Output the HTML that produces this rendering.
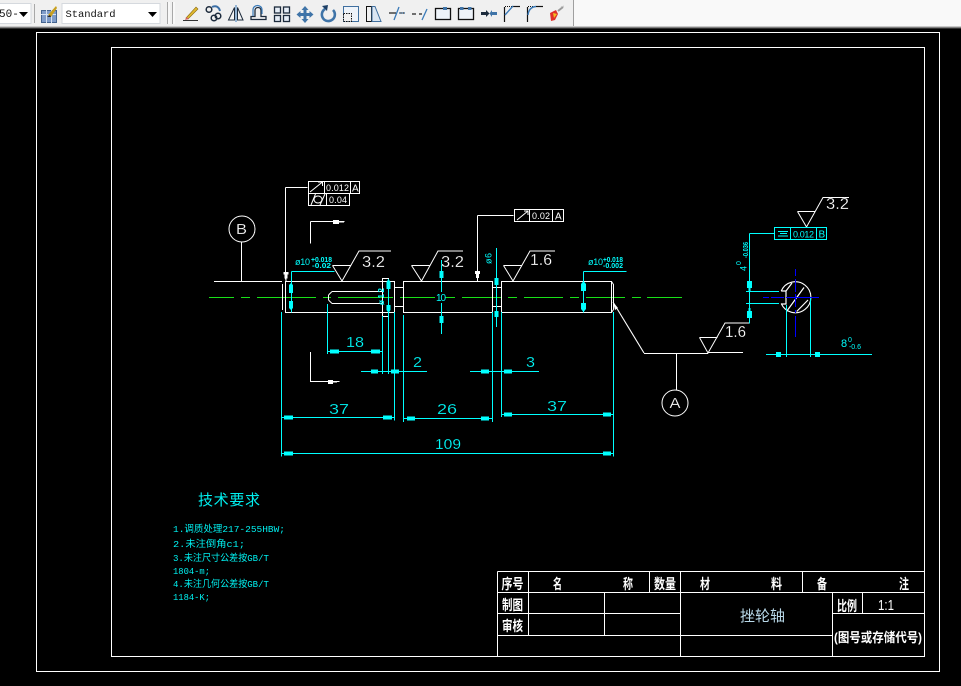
<!DOCTYPE html>
<html><head><meta charset="utf-8">
<style>
html,body{margin:0;padding:0;background:#000;width:961px;height:686px;overflow:hidden}
svg{position:absolute;left:0;top:0;display:block}
.t{font-family:"Liberation Sans","Noto Sans CJK SC",sans-serif}
.m{font-family:"Liberation Mono",monospace}
.c{font-family:"Liberation Sans","Noto Sans CJK SC",sans-serif}
.n{font-family:"Liberation Mono","Noto Sans CJK SC",monospace}
.b{font-family:"Liberation Sans","Noto Sans CJK SC",sans-serif;font-weight:700}
</style></head><body>
<svg width="961" height="686" viewBox="0 0 961 686" xmlns="http://www.w3.org/2000/svg">
<rect width="961" height="686" fill="#000"/>

<!-- toolbar -->
<rect x="0" y="0" width="961" height="27" fill="#f9f9f9"/>
<rect x="0" y="0" width="573" height="26" fill="#f0f0f0"/>
<rect x="573" y="0" width="1" height="26" fill="#a0a0a0"/>
<rect x="0" y="26" width="961" height="1" fill="#c8c8c8"/>
<rect x="0" y="27" width="961" height="1" fill="#808080"/>
<rect x="0" y="28" width="961" height="1" fill="#303030"/>
<rect x="-2" y="3.500" width="33" height="20" fill="#fff" stroke="#d5d9de"/>
<text x="-1" y="17" class="m" font-size="11" fill="#111">50-</text>
<path d="M19 12h9l-4.500 5z" fill="#000"/>
<rect x="34" y="4" width="1" height="19" fill="#a8a8a8"/>
<rect x="41.500" y="10.500" width="15" height="12" fill="#7f9cc9" stroke="#44648f"/>
<path d="M41 14.500h15M46.500 10v13M51.500 10v13" stroke="#d6e2f2"/>
<path d="M48 15l8-9 1 2-6 9z" fill="#c8a020"/><path d="M47 17l3-2 1 2z" fill="#222"/>
<rect x="62" y="3.500" width="98" height="20" fill="#fff" stroke="#d5d9de"/>
<text x="65.500" y="17" class="m" font-size="10.500" fill="#111" textLength="50">Standard</text>
<path d="M148 12h9l-4.500 5z" fill="#000"/>
<path d="M167.500 2v22M172.500 2v22" stroke="#a8a8a8"/><path d="M169 2v22M174 2v22" stroke="#fff"/>

<!-- icons -->
<path d="M183 20.500h15" stroke="#333"/><path d="M186 18l10-11 2 2-10 10z" fill="#e0b830" stroke="#8a6a10" stroke-width=".6"/><path d="M185 20l1.500-3 2.500 2z" fill="#d06060"/>
<g fill="none" stroke="#1d2b3c" stroke-width="1.500"><circle cx="209" cy="9.500" r="2.800"/><circle cx="214" cy="18" r="2.800"/><circle cx="218" cy="16" r="2.800"/></g><path d="M212 7c4-2 7 0 8 4" fill="none" stroke="#3a6ea5" stroke-width="2"/>
<path d="M234.500 7.500l-6 12.500h6zM237.500 7.500l5.500 12.500h-5.500z" fill="#f4f4f4" stroke="#1d2b3c"/><path d="M236 5v17" stroke="#3a7ab8"/>
<path d="M251 19.500h15v-3h-5v-6c0-4-6-4-6 0v6h-4z" fill="none" stroke="#1d2b3c" stroke-width="1.300"/><path d="M253 16v-6c0-6 9-6 9 0v4" fill="none" stroke="#3a7ab8" stroke-width="1.200"/>
<g fill="#e6eef7" stroke="#1d2b3c" stroke-width="1.300"><rect x="274.500" y="7" width="6" height="6"/><rect x="283.500" y="7" width="6" height="6"/><rect x="274.500" y="15.500" width="6" height="6"/><rect x="283.500" y="15.500" width="6" height="6"/></g>
<path d="M305 6l3.500 4h-2v3h3v-2l4 3.500-4 3.500v-2h-3v3h2l-3.500 4-3.500-4h2v-3h-3v2l-4-3.500 4-3.500v2h3v-3h-2z" fill="#3f74a8"/>
<path d="M325 9a6.500 6.500 0 1 0 8 1" fill="none" stroke="#3f74a8" stroke-width="2.600"/><path d="M322 6l6-1 -1 6z" fill="#1d3f66"/>
<rect x="343.500" y="6.500" width="15" height="15" fill="#eef3f9" stroke="#3f6f9f"/><rect x="343.500" y="13.500" width="8" height="8" fill="#f0f0f0" stroke="#111" stroke-dasharray="1.500 1"/>
<rect x="366.500" y="6.500" width="5" height="15" fill="none" stroke="#111"/><path d="M372 6.500h3l6 15h-9z" fill="#dbe6f2" stroke="#3f6f9f"/>
<path d="M389 13h7M399 13h6" stroke="#222" stroke-width="1.200"/><path d="M399 13h6" stroke="#3a7ab8" stroke-dasharray="1.500 1"/><path d="M394 20l5-13" stroke="#3a7ab8" stroke-width="1.300"/>
<path d="M412 14h4M419 14h3" stroke="#222" stroke-width="1.200"/><path d="M422 20l5-11" stroke="#3a7ab8" stroke-width="1.300"/>
<rect x="435.500" y="8.500" width="15" height="11" fill="#eef3f9" stroke="#111" stroke-width="1.300"/><rect x="443" y="7" width="4" height="3" fill="#3f74a8"/>
<rect x="458.500" y="8.500" width="15" height="11" fill="#eef3f9" stroke="#111" stroke-width="1.300"/><rect x="460" y="7" width="3.500" height="3" fill="#3f74a8"/><rect x="468" y="7" width="3.500" height="3" fill="#3f74a8"/>
<path d="M481 12h5v-2l3.500 3.500-3.500 3.500v-2h-5z" fill="#1d2b3c"/><path d="M497 12h-5v-2l-2.500 3.500 2.500 3.500v-2h5z" fill="#3f74a8"/>
<path d="M504.500 22v-15" stroke="#111" stroke-width="1.200"/><path d="M513 6.500h7" stroke="#111" stroke-width="1.200"/><path d="M505 6.500h8" stroke="#111" stroke-dasharray="1 1"/><path d="M505 15l8-9" stroke="#3a7ab8" stroke-width="1.400"/>
<path d="M527.500 22v-15" stroke="#111" stroke-width="1.200"/><path d="M536 6.500h7" stroke="#111" stroke-width="1.200"/><path d="M528 6.500h8" stroke="#111" stroke-dasharray="1 1"/><path d="M528 15q1-8 8-8.500" fill="none" stroke="#3a7ab8" stroke-width="1.400"/>
<path d="M550 13l6-3 2 4-3 6-4 1z" fill="#e0302a"/><path d="M553 13l4 1-3 4z" fill="#f0c020"/><path d="M558 11l5-4" stroke="#999" stroke-width="2"/><path d="M561 7l3-1" stroke="#bbb" stroke-dasharray="1 1"/>

<!-- frames -->
<g fill="none" stroke="#fff" shape-rendering="crispEdges">
<rect x="36.500" y="32.500" width="903" height="639"/>
<rect x="111.500" y="47.500" width="813" height="609"/>
</g>

<!-- centre line -->
<path d="M209 297.500h25M241 297.500h9M257 297.500h59M323 297.500h8M338 297.500h55M400 297.500h35M445 297.500h10M462 297.500h39M508 297.500h9M524 297.500h39M570 297.500h9M586 297.500h39M632 297.500h9M647 297.500h35" stroke="#19e019" shape-rendering="crispEdges"/>

<!-- shaft -->
<g fill="none" stroke="#fff" shape-rendering="crispEdges">
<path d="M214 281.500h68M285 281.500h104M282.500 284v26M285 312.500h110M285.500 281.500v31"/>
<path d="M382.500 278.500h6v38h-6zM388.500 281.500h6v31M394.500 287.500h9M394.500 306.500h9"/>
<rect x="403.500" y="281.500" width="89" height="31"/>
<path d="M492.500 287.500h9M492.500 306.500h9"/>
<path d="M501.500 281.500h110v31h-110z"/>
<path d="M241.500 242v39"/>
<path d="M285.500 187.500h22M285.500 187.500v92"/>
<path d="M477.500 215.500h36M477.500 215.500v66"/>
<path d="M310.500 221.500v22M310.500 221.500h34M310.500 352v29.500h29"/>
<path d="M644 353.500h64M708 352.500h35M676.500 353.500v37"/>
<rect x="308.500" y="181.500" width="51" height="12"/><path d="M324.500 181.500v12M350.500 181.500v12"/>
<rect x="308.500" y="193.500" width="41" height="12"/><path d="M326.500 193.500v12"/>
<rect x="514.500" y="209.500" width="49" height="12"/><path d="M529.500 209.500v12M552.500 209.500v12"/>
<path d="M332 291.500h50M332 303.500h50M328.500 295v5"/>
</g>
<g fill="none" stroke="#fff">
<path d="M328.500 295l3.500-3.500M328.500 300l3.500 3.500M611.500 281.500l2 3v25l-2 3"/>
<circle cx="242" cy="229" r="13"/>
<circle cx="675" cy="403" r="13"/>
<path d="M332.500 265.500h18M332.500 265.500l9.500 15.500 17-30h32"/>
<path d="M411.500 265.500h18M411.500 265.500l10 15.500 16.500-30h25"/>
<path d="M503.500 265.500h18M503.500 265.500l9.500 15.500 17-30h25"/>
<path d="M699.500 337.500h18M699.500 337.500l8.500 15.500 17-30h24"/>
<path d="M797.500 211.500h18M797.500 211.500l9 15.500 16.500-29.500h26"/>
<path d="M613 302l31 51" stroke-width="1.100"/>
<path d="M310 192l12.500-10M318 182h4.500v4"/>
<ellipse cx="318" cy="199.500" rx="4" ry="3.500"/><path d="M311 205l4.500-11M320 205l5-11"/>
<path d="M517 220l11-9M524 211h4v4"/>
<path d="M781.200 291A15.500 15.500 0 1 1 781.200 303.500" stroke-width="1.100"/>
<path d="M781.200 291h4.800v13h-4.800M786 291l6-8M786.500 311.500l17.500-24M796.700 311.500l11.300-11.500" stroke-width="1.200"/>
</g>
<g fill="#fff">
<path d="M283.500 272h5v2.500h-1v4h-1v3h-1v-3h-1v-4h-1z"/>
<path d="M475 271h5v3h-1v4h-1v3h-1v-3h-1v-4h-1z"/>
<path d="M613 302l5 6-3 2z"/>
<rect x="333" y="220" width="6" height="4"/><rect x="339" y="221" width="5" height="1.500"/>
<rect x="328" y="380" width="5" height="4"/><rect x="333" y="381" width="4" height="1.500"/>
</g>

<!-- cyan dimensions -->
<g fill="none" stroke="#00ffff" shape-rendering="crispEdges">
<path d="M291.500 271.500h43M291.500 271.500v41"/>
<path d="M583.500 271.500h43M583.500 271.500v41"/>
<path d="M388.500 279v37M281.500 312v144.500M327.500 304v50M382.500 316v58M388.500 316v58M394.500 312v108.500M403.500 315v107M492.500 312v110M501.500 312v105M613.500 312v144.500M496.500 248v79M441.500 260v32M441.500 303v31"/>
<path d="M327.500 351.500h55M361 371.500h66M470 371.500h69M282 417.500h112M403 418.500h89M501 414.500h112M282 453.500h331"/>
<path d="M749.500 233.500h25M749.500 233.500v90M746 291.500h33M746 303.500h33M786.500 305v52M810.500 297v60M766 354.500h106"/>
<rect x="774.500" y="227.500" width="52" height="12"/><path d="M790.500 227.500v12M816.500 227.500v12"/>
</g>
<path d="M778 231.500h10M780 233.500h7M778 236h10" stroke="#00ffff"/>
<g fill="#00ffff">
<path d="M291 283l2 2v8h-4v-8zM291 310l2-2v-7h-4v7z"/>
<path d="M583.500 281l2.500 3v7h-5v-7zM583.500 312l2.500-3v-6h-5v6z"/>
<path d="M388.500 279l2 3v7h-4v-7zM388.500 313l2-3v-5h-4v5z"/>
<rect x="439.500" y="271" width="4" height="7"/><rect x="439.500" y="316" width="4" height="7"/>
<rect x="494.500" y="278" width="4" height="7"/><rect x="494.500" y="311" width="4" height="6"/>
<rect x="747" y="281" width="5" height="7"/><rect x="748.500" y="288" width="2" height="3"/>
<rect x="747" y="311" width="5" height="7"/><rect x="748.500" y="308" width="2" height="3"/>
<rect x="776" y="352" width="5" height="5"/><rect x="815" y="352" width="5" height="5"/>
<rect x="330" y="349.500" width="9" height="4"/><rect x="371" y="349.500" width="9" height="4"/>
<rect x="371" y="369.500" width="7" height="4"/><rect x="391" y="369.500" width="8" height="4"/>
<rect x="481" y="369.500" width="8" height="4"/><rect x="504" y="369.500" width="8" height="4"/>
<rect x="284" y="415.500" width="9" height="4"/><rect x="383" y="415.500" width="9" height="4"/>
<rect x="407" y="416.500" width="8" height="4"/><rect x="481" y="416.500" width="8" height="4"/>
<rect x="504" y="412.500" width="8" height="4"/><rect x="603" y="412.500" width="8" height="4"/>
<rect x="284" y="451.500" width="9" height="4"/><rect x="603" y="451.500" width="8" height="4"/>
</g>
<path d="M763 297.500h6M771 297.500h13M786 297.500h33M795.500 269v7M795.500 279v13M795.500 294v13M795.500 310v3M795.500 316v21" stroke="#0000ff" fill="none" shape-rendering="crispEdges"/>

<!-- white labels -->
<g class="t" fill="#fff">
<g stroke="#000" stroke-width=".2">
<text x="236" y="234" font-size="15" textLength="11" lengthAdjust="spacingAndGlyphs">B</text>
<text x="669.500" y="408" font-size="15" textLength="11" lengthAdjust="spacingAndGlyphs">A</text>
<text x="362" y="267" font-size="16" textLength="23" lengthAdjust="spacingAndGlyphs">3.2</text>
<text x="441" y="267" font-size="16" textLength="23" lengthAdjust="spacingAndGlyphs">3.2</text>
<text x="530" y="265" font-size="16" textLength="22" lengthAdjust="spacingAndGlyphs">1.6</text>
<text x="725" y="337" font-size="16" textLength="21" lengthAdjust="spacingAndGlyphs">1.6</text>
<text x="826" y="209" font-size="16" textLength="23" lengthAdjust="spacingAndGlyphs">3.2</text>
</g>
<text x="326" y="191" font-size="9" textLength="23">0.012</text>
<text x="352" y="191.500" font-size="10" textLength="7">A</text>
<text x="329" y="203" font-size="9" textLength="18">0.04</text>
<text x="532" y="219" font-size="9" textLength="18">0.02</text>
<text x="555" y="219.500" font-size="10" textLength="7">A</text>
</g>

<!-- cyan labels -->
<g class="t" fill="#00ffff">
<text x="295" y="265" font-size="9" textLength="15">ø10</text>
<text x="311" y="262" font-size="7" font-weight="700" textLength="21" lengthAdjust="spacingAndGlyphs">+0.018</text>
<text x="312" y="268" font-size="7" font-weight="700" textLength="19" lengthAdjust="spacingAndGlyphs">-0.02</text>
<text x="588" y="265" font-size="9" textLength="15">ø10</text>
<text x="603" y="262" font-size="7" font-weight="700" textLength="20" lengthAdjust="spacingAndGlyphs">+0.018</text>
<text x="603" y="268" font-size="7" font-weight="700" textLength="20" lengthAdjust="spacingAndGlyphs">-0.002</text>
<text x="436" y="301" font-size="10" textLength="10">10</text>
<text transform="translate(491.500,264) rotate(-90)" font-size="9" textLength="11">ø6</text>
<text transform="translate(384,305) rotate(-90)" font-size="8" font-weight="700" textLength="17">ø12</text>
<text transform="translate(746.500,271) rotate(-90)" font-size="9" textLength="6">4</text>
<text transform="translate(741,265) rotate(-90)" font-size="7">0</text>
<text transform="translate(748,258) rotate(-90)" font-size="7" font-weight="700" textLength="16" lengthAdjust="spacingAndGlyphs">-0.036</text>
<text x="793" y="237.500" font-size="9" textLength="21">0.012</text>
<text x="818.500" y="237.500" font-size="10" textLength="7">B</text>
<text x="841" y="347" font-size="11" textLength="8">8</text>
<text x="848" y="342" font-size="7">0</text>
<text x="849" y="349" font-size="7" textLength="12">-0.6</text>
<g stroke="#000" stroke-width=".2">
<text x="346" y="347" font-size="15" textLength="18" lengthAdjust="spacingAndGlyphs">18</text>
<text x="413" y="367" font-size="15" textLength="9" lengthAdjust="spacingAndGlyphs">2</text>
<text x="526" y="367" font-size="15" textLength="9" lengthAdjust="spacingAndGlyphs">3</text>
<text x="329" y="414" font-size="15" textLength="20" lengthAdjust="spacingAndGlyphs">37</text>
<text x="437" y="414" font-size="15" textLength="20" lengthAdjust="spacingAndGlyphs">26</text>
<text x="547" y="411" font-size="15" textLength="20" lengthAdjust="spacingAndGlyphs">37</text>
<text x="435" y="449" font-size="15" textLength="26" lengthAdjust="spacingAndGlyphs">109</text>
</g>
</g>

<!-- notes -->
<g class="n" fill="#00f0f0">
<text x="198" y="505" class="c" font-size="15" textLength="62">技术要求</text>
<text x="173" y="532" font-size="9.500" textLength="112" lengthAdjust="spacingAndGlyphs">1.调质处理217-255HBW;</text>
<text x="173" y="547" font-size="9.500" textLength="72" lengthAdjust="spacingAndGlyphs">2.未注倒角c1;</text>
<text x="173" y="561" font-size="9.500" textLength="96" lengthAdjust="spacingAndGlyphs">3.未注尺寸公差按GB/T</text>
<text x="173" y="574" font-size="9.500" textLength="37" lengthAdjust="spacingAndGlyphs">1804-m;</text>
<text x="173" y="587" font-size="9.500" textLength="96" lengthAdjust="spacingAndGlyphs">4.未注几何公差按GB/T</text>
<text x="173" y="600" font-size="9.500" textLength="37" lengthAdjust="spacingAndGlyphs">1184-K;</text>
</g>

<!-- title block -->
<g fill="none" stroke="#fff" shape-rendering="crispEdges">
<path d="M497.500 571.500h427M497.500 592.500h427M497.500 613.500h183M832.500 613.500h92M497.500 635.500h335M497.500 656.500h427"/>
<path d="M497.500 571.500v85M528.500 571.500v64M604.500 592.500v43M649.500 571.500v21M680.500 571.500v85M802.500 571.500v21M832.500 592.500v64M862.500 592.500v21"/>
</g>
<g class="b" fill="#fff" font-size="14">
<text x="501.500" y="589" textLength="22" lengthAdjust="spacingAndGlyphs">序号</text>
<text x="553" y="589" textLength="9" lengthAdjust="spacingAndGlyphs">名</text>
<text x="623" y="589" textLength="10" lengthAdjust="spacingAndGlyphs">称</text>
<text x="654" y="589" textLength="22" lengthAdjust="spacingAndGlyphs">数量</text>
<text x="700" y="589" textLength="10" lengthAdjust="spacingAndGlyphs">材</text>
<text x="771" y="589" textLength="11" lengthAdjust="spacingAndGlyphs">料</text>
<text x="817" y="589" textLength="10" lengthAdjust="spacingAndGlyphs">备</text>
<text x="899" y="589" textLength="10" lengthAdjust="spacingAndGlyphs">注</text>
<text x="502" y="610" textLength="21" lengthAdjust="spacingAndGlyphs">制图</text>
<text x="502" y="631" textLength="21" lengthAdjust="spacingAndGlyphs">审核</text>
<text x="837" y="611" textLength="20" lengthAdjust="spacingAndGlyphs">比例</text>
<text x="834" y="642" font-size="13" textLength="88" lengthAdjust="spacingAndGlyphs">(图号或存储代号)</text>
</g>
<text x="878" y="610" class="t" fill="#fff" font-size="15" textLength="16" lengthAdjust="spacingAndGlyphs">1:1</text>
<text x="740" y="621" class="c" fill="#b8d8e8" font-size="15" textLength="45">挫轮轴</text>
</svg>
</body></html>
